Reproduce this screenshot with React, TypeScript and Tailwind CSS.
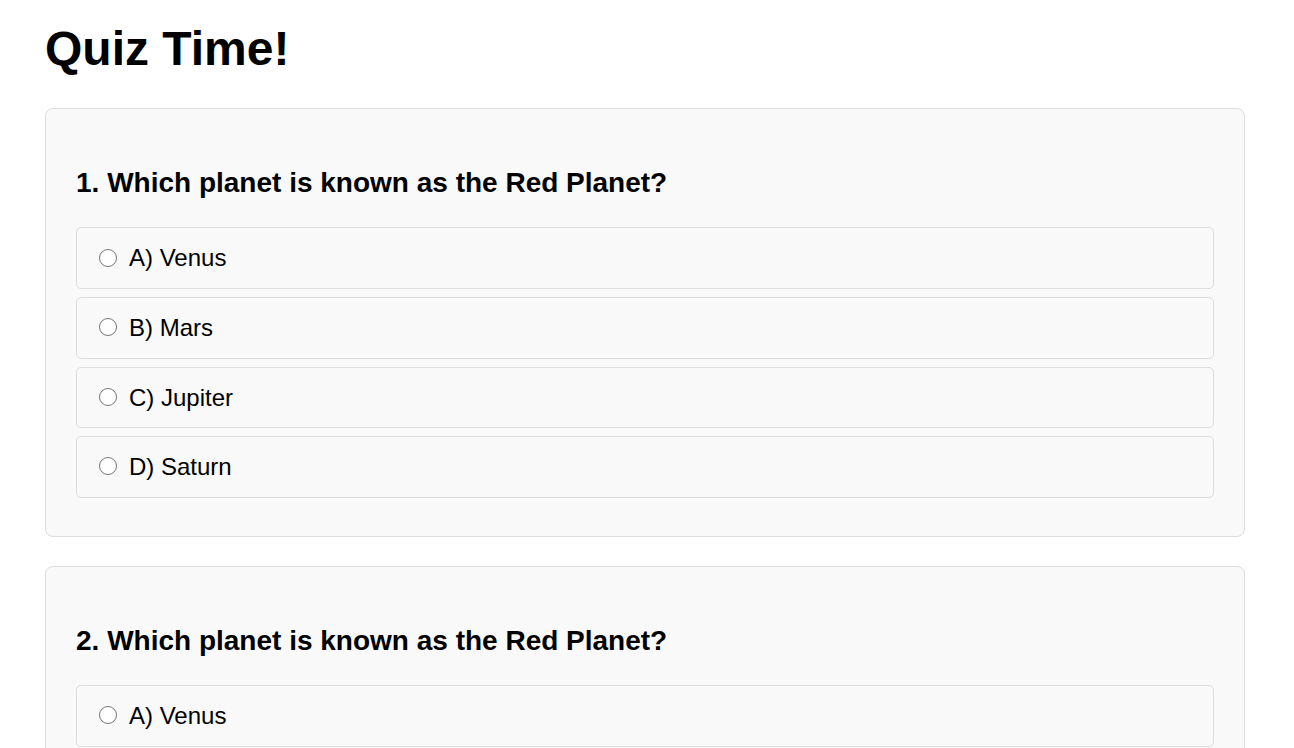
const questions = [
  {
    question: "Which planet is known as the Red Planet?",
    options: ["A) Venus", "B) Mars", "C) Jupiter", "D) Saturn"],
  },
  {
    question: "Which planet is known as the Red Planet?",
    options: ["A) Venus", "B) Mars", "C) Jupiter", "D) Saturn"],
  },
];

export default function App() {
  return (
    <div className="min-h-screen bg-white pl-[45px] pb-10 text-black font-['Liberation_Sans',Arial,sans-serif]">
      <h1 className="pt-[21px] text-[48px] leading-[1.15] font-bold">Quiz Time!</h1>

      <div className="mt-[32px] w-[1200px]">
        {questions.map((q, qi) => (
          <div
            key={qi}
            className="mb-[29px] rounded-[8px] border border-[#dddddd] bg-[#f9f9f9] px-[30px] pt-[30px] pb-[30px]"
          >
            <h2 className="mt-[28px] mb-[28px] text-[28px] leading-[1.15] font-bold">
              {qi + 1}. {q.question}
            </h2>

            {q.options.map((opt, oi) => (
              <label
                key={oi}
                className="mb-[8px] flex items-center rounded-[5px] border border-[#dddddd] bg-[#f9f9f9] p-[16px] text-[24px] leading-[1.15] cursor-pointer"
              >
                <input
                  type="radio"
                  name={`q${qi}`}
                  className="m-0 ml-[6px] mr-[12px] mt-[-1px] h-[18px] w-[18px] shrink-0 appearance-none rounded-full border-[1.5px] border-[#767676] bg-white checked:border-[5px] checked:border-[#0075ff]"
                />
                <span>{opt}</span>
              </label>
            ))}
          </div>
        ))}
      </div>
    </div>
  );
}
